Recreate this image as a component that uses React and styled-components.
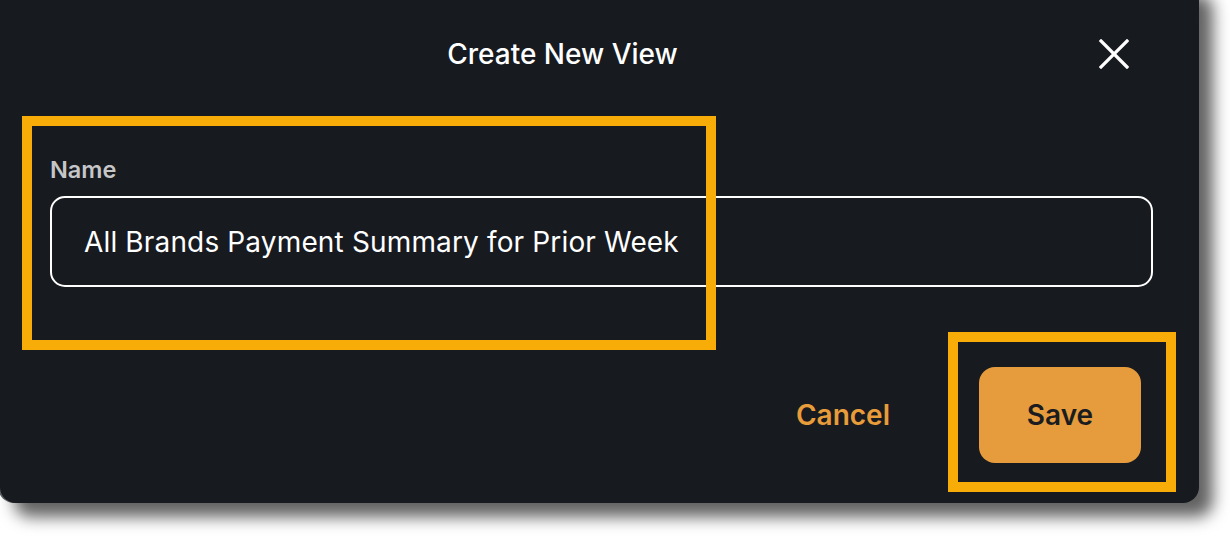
import React from "react";
import styled, { createGlobalStyle } from "styled-components";

const GlobalStyle = createGlobalStyle`
  html, body {
    margin: 0;
    padding: 0;
    background: #ffffff;
    overflow: hidden;
  }
  body {
    font-family: Inter, "Noto Sans", "Liberation Sans", sans-serif;
  }
`;

const Screen = styled.div`
  width: 1230px;
  height: 536px;
  overflow: hidden;
`;

const Dialog = styled.div`
  position: relative;
  width: 1199px;
  height: 523px;
  margin-top: -20px;
  padding: 20px 46px 0 50px;
  box-sizing: border-box;
  background: #171a1f;
  border-radius: 16px;
  box-shadow: -2px 0 0 #5c5e61, 14px 14px 16px rgba(0, 0, 0, 0.62);
  display: flex;
  flex-direction: column;
`;

const Header = styled.div`
  height: 108px;
  display: flex;
  align-items: center;
`;

const Title = styled.h2`
  flex: 1;
  margin: 0;
  text-align: center;
  color: #ffffff;
  font-size: 28px;
  font-weight: 500;
`;

const CloseButton = styled.button`
  width: 78px;
  height: 60px;
  padding: 0;
  border: none;
  background: transparent;
  display: flex;
  align-items: center;
  justify-content: center;
  cursor: pointer;
`;

const Field = styled.div`
  margin-top: 49px;
  display: flex;
  flex-direction: column;
`;

const Label = styled.label`
  color: #c6c6c8;
  font-size: 23.5px;
  font-weight: 600;
  line-height: 26px;
  margin-bottom: 13px;
`;

const Input = styled.input`
  height: 91px;
  box-sizing: border-box;
  border: 2px solid #ffffff;
  border-radius: 15px;
  background: transparent;
  padding: 0 32px;
  color: #ffffff;
  font-family: inherit;
  font-size: 28px;
  font-weight: 400;
  letter-spacing: 0.15px;
  outline: none;
`;

const Footer = styled.div`
  margin-top: 80px;
  padding-right: 12px;
  display: flex;
  justify-content: flex-end;
  align-items: center;
  gap: 65px;
`;

const TextButton = styled.button`
  border: none;
  background: transparent;
  padding: 0 24px;
  color: #e89c3a;
  font-family: inherit;
  font-size: 28px;
  font-weight: 600;
  cursor: pointer;
`;

const PrimaryButton = styled.button`
  width: 162px;
  height: 96px;
  border: none;
  border-radius: 16px;
  background: #e69c3c;
  color: #1b1c1f;
  font-family: inherit;
  font-size: 28px;
  font-weight: 600;
  cursor: pointer;
`;

// orange callout frames drawn over the dialog
const Callout = styled.div`
  position: absolute;
  box-sizing: border-box;
  border: 10px solid #f8ac08;
  pointer-events: none;
  left: ${(p) => p.$x}px;
  top: ${(p) => p.$y + 20}px;
  width: ${(p) => p.$w}px;
  height: ${(p) => p.$h}px;
`;

const CloseIcon = () => (
  <svg width="30" height="30" viewBox="0 0 30 30" fill="none">
    <path
      d="M2 2 L28 28 M28 2 L2 28"
      stroke="#ffffff"
      strokeWidth="3.2"
      strokeLinecap="square"
    />
  </svg>
);

const App = () => {
  return (
    <Screen>
      <GlobalStyle />
      <Dialog>
        <Header>
          <Title>Create New View</Title>
          <CloseButton aria-label="Close">
            <CloseIcon />
          </CloseButton>
        </Header>
        <Field>
          <Label>Name</Label>
          <Input defaultValue="All Brands Payment Summary for Prior Week" />
        </Field>
        <Footer>
          <TextButton>Cancel</TextButton>
          <PrimaryButton>Save</PrimaryButton>
        </Footer>
        <Callout $x={22} $y={116} $w={694} $h={234} />
        <Callout $x={948} $y={332} $w={228} $h={160} />
      </Dialog>
    </Screen>
  );
};

export default App;
